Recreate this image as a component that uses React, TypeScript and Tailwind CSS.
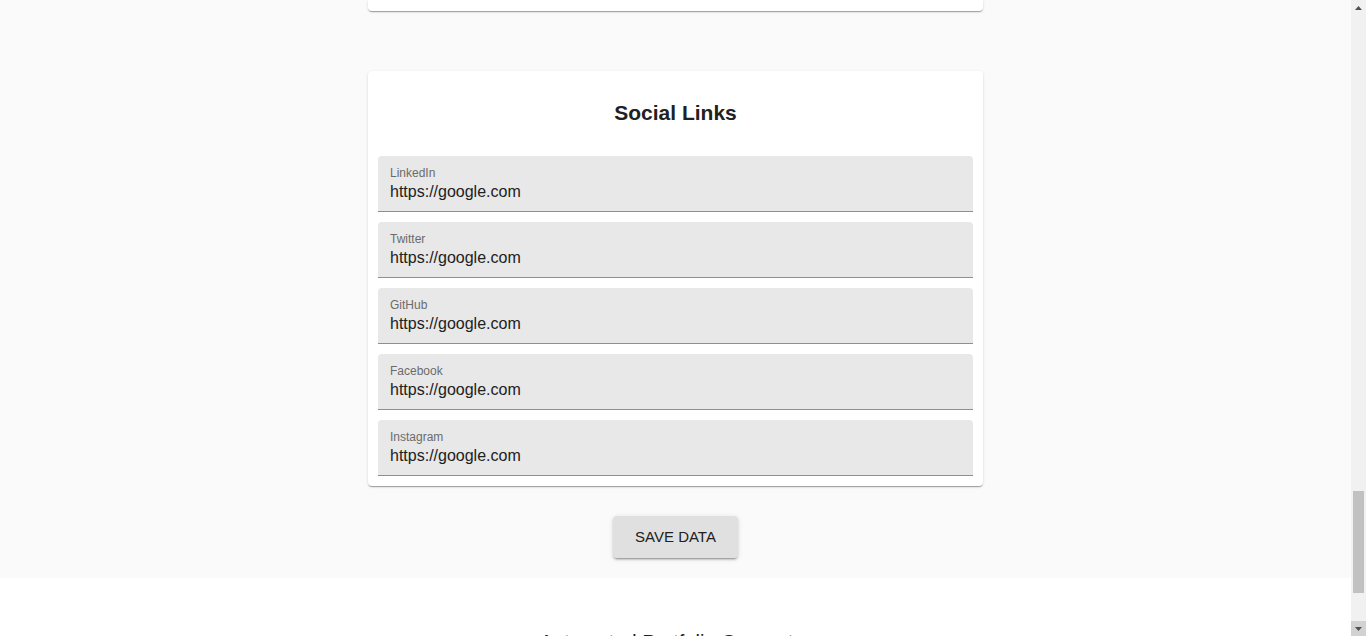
const links = ["LinkedIn", "Twitter", "GitHub", "Facebook", "Instagram"];

function Field({ label }: { label: string }) {
  return (
    <div className="h-[56px] bg-[#e8e8e8] rounded-t-[4px] border-b border-[#8f8f8f] px-[12px] flex flex-col">
      <div className="pt-[10px] text-[12px] leading-[14px] text-[#6b6b6b]">{label}</div>
      <div className="text-[16px] leading-[23px] text-[#212121]">https://google.com</div>
    </div>
  );
}

export default function App() {
  return (
    <div className="h-[636px] overflow-hidden flex bg-[#fafafa] font-['Liberation_Sans',Arial,sans-serif]">
      <div className="flex-1 flex flex-col overflow-hidden">
        <div className="flex flex-col items-center">
          {/* bottom edge of the card above */}
          <div className="w-[615px] h-[11px] bg-white rounded-b-[4px] shadow-[0_2px_1px_-1px_rgba(0,0,0,0.2),0_1px_1px_0_rgba(0,0,0,0.14),0_1px_3px_0_rgba(0,0,0,0.12)]" />

          <div className="mt-[60px] w-[615px] bg-white rounded-[4px] shadow-[0_2px_1px_-1px_rgba(0,0,0,0.2),0_1px_1px_0_rgba(0,0,0,0.14),0_1px_3px_0_rgba(0,0,0,0.12)] px-[10px] pb-[10px]">
            <h2 className="pt-[27px] pb-[29px] text-center text-[21px] leading-[29px] font-bold text-[#212121]">
              Social Links
            </h2>
            <div className="flex flex-col gap-[10px]">
              {links.map((l) => (
                <Field key={l} label={l} />
              ))}
            </div>
          </div>

          <button className="mt-[30px] h-[42px] px-[22px] bg-[#e0e0e0] rounded-[4px] text-[15px] leading-[26px] text-[#212121] shadow-[0_3px_1px_-2px_rgba(0,0,0,0.2),0_2px_2px_0_rgba(0,0,0,0.14),0_1px_5px_0_rgba(0,0,0,0.12)]">
            SAVE DATA
          </button>
        </div>

        <footer className="mt-[20px] flex-1 bg-white pt-[50px] text-center text-[20px] leading-[28px] text-[#212121]">
          Automated Portfolio Generator
        </footer>
      </div>

      {/* scrollbar */}
      <div className="w-[15px] bg-[#f1f1f1] flex flex-col">
        <div className="h-[15px] flex items-center justify-center">
          <svg width="7" height="4" viewBox="0 0 7 4">
            <path d="M0 4 L3.5 0 L7 4 Z" fill="#505050" />
          </svg>
        </div>
        <div className="flex-1 flex flex-col px-[2px] pt-[476px]">
          <div className="h-[102px] bg-[#c1c1c1]" />
        </div>
        <div className="h-[15px] bg-[#d2d2d2] flex items-center justify-center">
          <svg width="7" height="4" viewBox="0 0 7 4">
            <path d="M0 0 L3.5 4 L7 0 Z" fill="#505050" />
          </svg>
        </div>
      </div>
    </div>
  );
}
